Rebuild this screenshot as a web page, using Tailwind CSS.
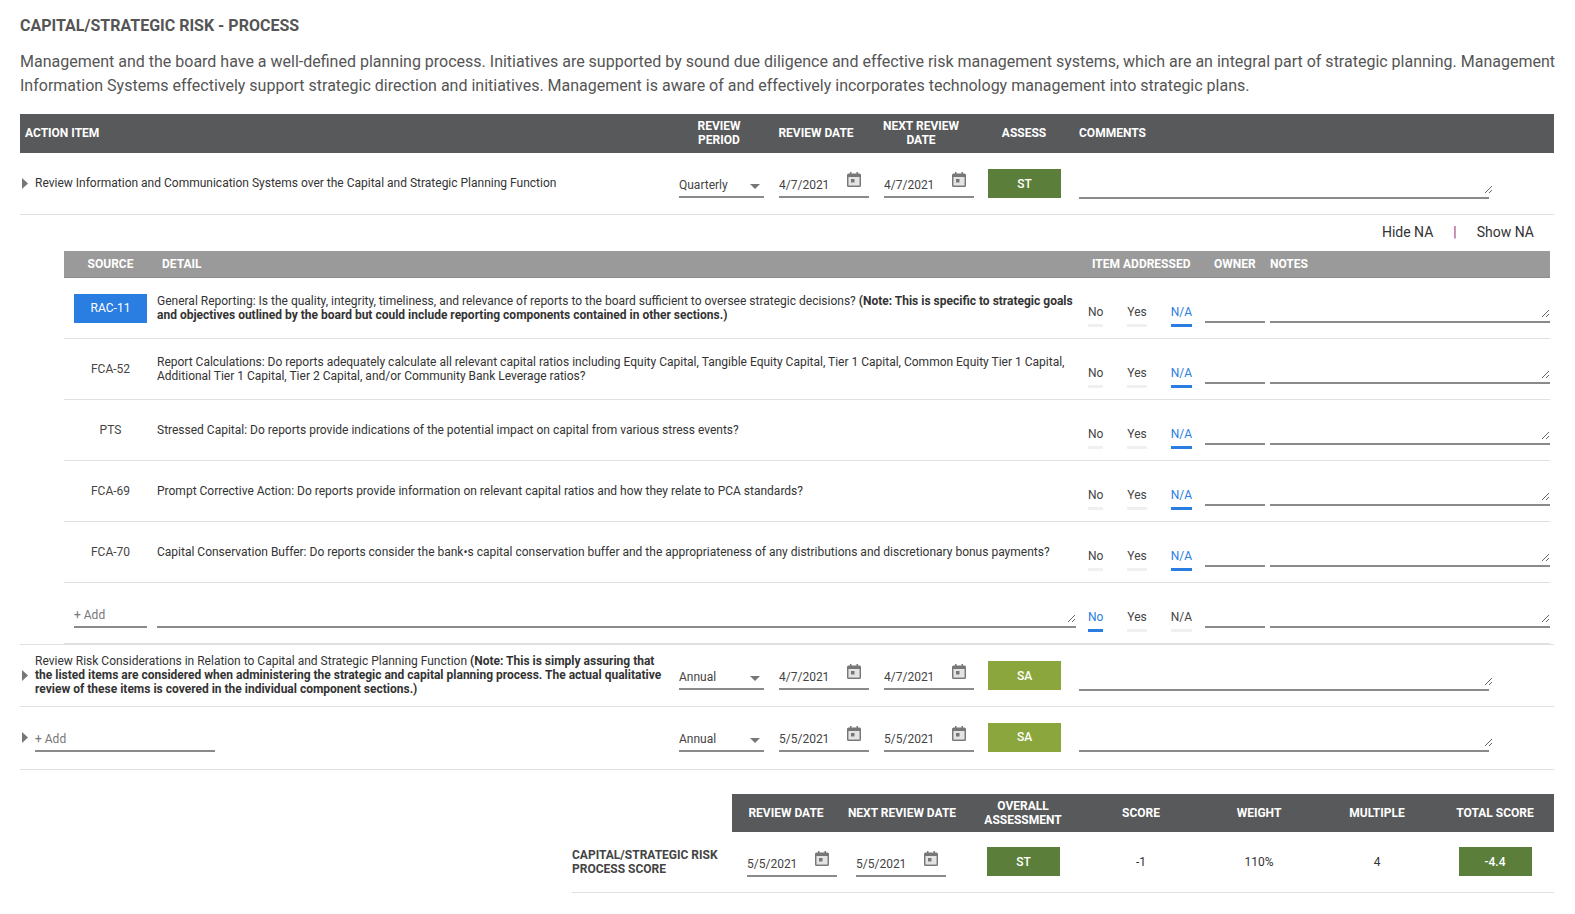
<!DOCTYPE html>
<html>
  <head>
    <title>Capital/Strategic Risk - Process</title>
    <script src="https://cdn.jsdelivr.net/npm/@tailwindcss/browser@4"></script>
  </head>
  <body class="bg-white font-['Roboto',sans-serif] text-xs text-[#333]">
    <div class="pl-[20px] pr-[21px] pt-[14px]">
      <h1 class="text-base leading-6 font-bold text-[#555]">CAPITAL/STRATEGIC RISK - PROCESS</h1>
      <p class="-mr-[6px] mt-3 text-base leading-6 text-[#555]">Management and the board have a well-defined planning process. Initiatives are supported by sound due diligence and effective risk management systems, which are an integral part of strategic planning. Management Information Systems effectively support strategic direction and initiatives. Management is aware of and effectively incorporates technology management into strategic plans.</p>

      <div class="mt-[16px] flex h-[39px] items-center bg-[#58595b] pb-[2px] font-bold leading-[14px] text-white">
        <div class="w-[651px] pl-[5px]">ACTION ITEM</div>
        <div class="w-[96px] text-center">REVIEW<br>PERIOD</div>
        <div class="w-[98px] text-center">REVIEW DATE</div>
        <div class="w-[112px] text-center">NEXT REVIEW<br>DATE</div>
        <div class="w-[94px] text-center">ASSESS</div>
        <div class="pl-[8px]">COMMENTS</div>
      </div>

      <div id="action-1"></div>

      <div class="flex h-[36px] items-center justify-end pb-[2px] pr-[20px] text-sm text-[#333]">
        <span>Hide NA</span>
        <span class="mx-[20px] text-[#a0306e]">|</span>
        <span>Show NA</span>
      </div>

      <div class="ml-[44px] mr-[4px]">
        <div class="flex h-[27px] items-center border-b border-[#8c8c8c] bg-[#9a9a9a] font-bold text-white">
          <div class="w-[93px] text-center">SOURCE</div>
          <div class="w-[935px] pl-[5px]">DETAIL</div>
          <div class="w-[122px]">ITEM ADDRESSED</div>
          <div class="w-[56px]">OWNER</div>
          <div>NOTES</div>
        </div>
        <div id="detail-rows"></div>
        <div class="flex h-[61px] items-start border-b border-[#e0e0e0] pt-[16px]">
          <div class="ml-[10px] flex h-[29px] w-[73px] items-end border-b-2 border-[#8a8a8a] pb-[3px] text-[#777]">+ Add</div>
          <div class="ml-[10px] h-[29px] w-[919px] border-b-2 border-[#8a8a8a]">
            <textarea rows="1" class="block h-[24px] w-full resize outline-none"></textarea>
          </div>
          <div id="add-status" class="ml-[12px] flex gap-6"></div>
          <div class="ml-[13px] h-[29px] w-[60px] border-b-2 border-[#8a8a8a]"></div>
          <div class="ml-[5px] h-[29px] w-[280px] border-b-2 border-[#8a8a8a]">
            <textarea rows="1" class="block h-[24px] w-full resize outline-none"></textarea>
          </div>
        </div>
      </div>

      <div id="action-2"></div>
      <div id="action-3"></div>

      <div class="ml-[712px] mt-[24px] flex h-[38px] items-center bg-[#58595b] text-center font-bold leading-[14px] text-white">
        <div class="w-[108px]">REVIEW DATE</div>
        <div class="w-[124px]">NEXT REVIEW DATE</div>
        <div class="w-[118px]">OVERALL<br>ASSESSMENT</div>
        <div class="w-[118px]">SCORE</div>
        <div class="w-[118px]">WEIGHT</div>
        <div class="w-[118px]">MULTIPLE</div>
        <div class="w-[118px]">TOTAL SCORE</div>
      </div>
      <div class="ml-[552px] flex h-[61px] items-center border-b border-[#e0e0e0] pb-[1px]">
        <div class="w-[175px] font-bold leading-[14px] text-[#444]">CAPITAL/STRATEGIC RISK<br>PROCESS SCORE</div>
        <div id="score-date-1" class="mt-[2px]"></div>
        <div id="score-date-2" class="ml-[19px] mt-[2px]"></div>
        <div class="ml-[41px] flex h-[29px] w-[73px] items-center justify-center bg-[#5b7f3a] font-medium text-white">ST</div>
        <div class="ml-[22px] w-[118px] text-center">-1</div>
        <div class="w-[118px] text-center">110%</div>
        <div class="w-[118px] text-center">4</div>
        <div class="flex w-[118px] justify-center">
          <div class="flex h-[29px] w-[73px] items-center justify-center bg-[#5b7f3a] font-medium text-white">-4.4</div>
        </div>
      </div>
    </div>

    <script>
      const calendarIcon = `<svg class="mr-[8px] mt-[3px] h-[15px] w-[14px] shrink-0" viewBox="0 0 14 15" fill="#777">
        <rect x="1.500" y="5" width="11" height="8.500" fill="#e4e4e4"/>
        <path fill-rule="evenodd" d="M3 0h1.5v1.5h5V0H11v1.5h1.5A1.5 1.5 0 0 1 14 3v10.5a1.5 1.5 0 0 1-1.5 1.5h-11A1.5 1.5 0 0 1 0 13.500V3a1.500 1.500 0 0 1 1.500-1.500H3zM1.500 5v8.500h11V5z"/>
        <rect x="4" y="7" width="3.500" height="3.500"/>
      </svg>`;

      function dateField(value) {
        return `<div class="flex h-[29px] w-[90px] justify-between border-b-2 border-[#8a8a8a]">
          <span class="self-end pb-[4px] leading-[14px] text-[#444]">${value}</span>${calendarIcon}
        </div>`;
      }

      function actionRow({ label, height, period, date, assess, assessClass }) {
        return `<div class="flex items-center border-b border-[#e0e0e0] ${height}">
          <svg class="ml-[2px] mr-[7px] h-[11px] w-[6px] shrink-0" viewBox="0 0 6 11" fill="#777"><path d="M0 0l6 5.500L0 11z"/></svg>
          <div class="w-[644px] shrink-0 pr-[9px] leading-[14px]">${label}</div>
          <div class="flex h-[29px] w-[85px] items-end justify-between border-b-2 border-[#8a8a8a] pb-[4px] leading-[14px] text-[#444]">
            <span>${period}</span>
            <svg class="mb-[3px] mr-[4px] h-[5px] w-[10px]" viewBox="0 0 10 5" fill="#777"><path d="M0 0h10L5 5z"/></svg>
          </div>
          <div class="ml-[15px]">${dateField(date)}</div>
          <div class="ml-[15px]">${dateField(date)}</div>
          <div class="ml-[14px] flex h-[29px] w-[73px] items-center justify-center font-medium text-white ${assessClass}">${assess}</div>
          <div class="ml-[18px] h-[30px] w-[410px] border-b-2 border-[#8a8a8a]">
            <textarea rows="1" class="block h-[25px] w-[414px] resize outline-none"></textarea>
          </div>
        </div>`;
      }

      function statusToggle(selected) {
        return ['No', 'Yes', 'N/A'].map(option => {
          const on = option === selected;
          return `<div class="flex flex-col pt-[11px]">
            <span class="leading-[14px] ${on ? 'text-[#2a7de1]' : 'text-[#444]'}">${option}</span>
            <span class="mt-[5px] h-[3px] ${on ? 'bg-[#2a7de1]' : 'bg-[#f0f0f0]'}"></span>
          </div>`;
        }).join('');
      }

      const details = [
        ['RAC-11', 'General Reporting: Is the quality, integrity, timeliness, and relevance of reports to the board sufficient to oversee strategic decisions? <span class="font-bold">(Note: This is specific to strategic goals and objectives outlined by the board but could include reporting components contained in other sections.)</span>'],
        ['FCA-52', 'Report Calculations: Do reports adequately calculate all relevant capital ratios including Equity Capital, Tangible Equity Capital, Tier 1 Capital, Common Equity Tier 1 Capital, Additional Tier 1 Capital, Tier 2 Capital, and/or Community Bank Leverage ratios?'],
        ['PTS', 'Stressed Capital: Do reports provide indications of the potential impact on capital from various stress events?'],
        ['FCA-69', 'Prompt Corrective Action: Do reports provide information on relevant capital ratios and how they relate to PCA standards?'],
        ['FCA-70', 'Capital Conservation Buffer: Do reports consider the bank•s capital conservation buffer and the appropriateness of any distributions and discretionary bonus payments?'],
      ];

      document.getElementById('detail-rows').innerHTML = details.map(([source, text], i) => `
        <div class="flex h-[61px] items-start border-b border-[#e0e0e0] pt-[16px]">
          <div class="ml-[10px] flex h-[29px] w-[73px] items-center justify-center pb-[2px] ${i === 0 ? 'bg-[#2a7de1] text-white' : 'text-[#444]'}">${source}</div>
          <div class="ml-[10px] flex h-[28px] w-[919px] items-center leading-[14px]"><div>${text}</div></div>
          <div class="ml-[12px] flex gap-6">${statusToggle('N/A')}</div>
          <div class="ml-[13px] h-[29px] w-[60px] border-b-2 border-[#8a8a8a]"></div>
          <div class="ml-[5px] h-[29px] w-[280px] border-b-2 border-[#8a8a8a]">
            <textarea rows="1" class="block h-[24px] w-full resize outline-none"></textarea>
          </div>
        </div>`).join('');

      document.getElementById('add-status').innerHTML = statusToggle('No');
      document.getElementById('score-date-1').innerHTML = dateField('5/5/2021');
      document.getElementById('score-date-2').innerHTML = dateField('5/5/2021');

      document.getElementById('action-1').innerHTML = actionRow({
        label: '<div class="-mt-[2px]">Review Information and Communication Systems over the Capital and Strategic Planning Function</div>',
        height: 'h-[62px]', period: 'Quarterly', date: '4/7/2021', assess: 'ST', assessClass: 'bg-[#5b7f3a]',
      });
      document.getElementById('action-2').innerHTML = actionRow({
        label: '<div class="-mt-[2px]">Review Risk Considerations in Relation to Capital and Strategic Planning Function <span class="font-bold">(Note: This is simply assuring that the listed items are considered when administering the strategic and capital planning process. The actual qualitative review of these items is covered in the individual component sections.)</span></div>',
        height: 'h-[63px] border-t', period: 'Annual', date: '4/7/2021', assess: 'SA', assessClass: 'bg-[#8aa63c]',
      });
      document.getElementById('action-3').innerHTML = actionRow({
        label: '<div class="flex h-[29px] w-[180px] items-end border-b-2 border-[#8a8a8a] pb-[4px] text-[#777]">+ Add</div>',
        height: 'h-[63px] pb-[2px]', period: 'Annual', date: '5/5/2021', assess: 'SA', assessClass: 'bg-[#8aa63c]',
      });
    </script>
  </body>
</html>
